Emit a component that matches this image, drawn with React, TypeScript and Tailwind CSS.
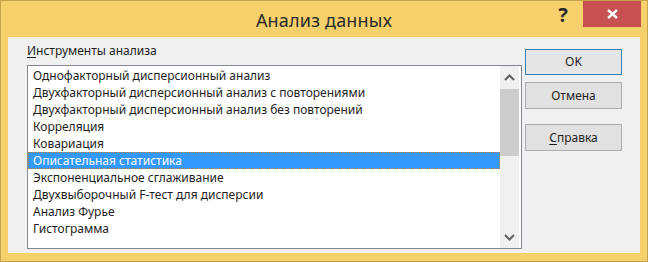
const tools = [
  "Однофакторный дисперсионный анализ",
  "Двухфакторный дисперсионный анализ с повторениями",
  "Двухфакторный дисперсионный анализ без повторений",
  "Корреляция",
  "Ковариация",
  "Описательная статистика",
  "Экспоненциальное сглаживание",
  "Двухвыборочный F-тест для дисперсии",
  "Анализ Фурье",
  "Гистограмма",
];

const font = { fontFamily: '"Noto Sans", "Open Sans", sans-serif' };

function Chevron({ up }: { up?: boolean }) {
  return (
    <svg width="11" height="7" viewBox="0 0 11 7">
      <path
        d={up ? "M1 6 L5.5 1.5 L10 6" : "M1 1 L5.5 5.5 L10 1"}
        fill="none"
        stroke="#606060"
        strokeWidth="2"
      />
    </svg>
  );
}

export default function App() {
  const selected = 5;

  return (
    <div
      className="w-[648px] h-[262px] border border-[#c4a449] bg-[#f5d06b] flex flex-col text-[#1e1e1e]"
      style={font}
    >
      {/* title bar */}
      <div className="h-[36px] flex items-start relative">
        <div className="absolute inset-x-0 top-[6px] text-center text-[18px] text-[#2b2b2b] tracking-[0.2px]">
          Анализ данных
        </div>
        <div className="ml-auto flex items-start">
          <div className="w-[24px] h-[26px] flex items-center justify-center text-[20px] font-bold text-[#2a2a2a] mt-[1px] mr-[8px]">
            ?
          </div>
          <div className="w-[58px] h-[26px] bg-[#c75050] flex items-center justify-center mr-[6px]">
            <svg width="11" height="10" viewBox="0 0 11 10">
              <path d="M1 1 L10 9 M10 1 L1 9" stroke="#fff" strokeWidth="2.4" />
            </svg>
          </div>
        </div>
      </div>

      {/* content */}
      <div className="mx-[7px] h-[216px] bg-[#f0f0f0] flex text-[12px] leading-[16px]">
        <div className="pl-[19px] pt-[6px] flex flex-col">
          <div className="mb-[6px]">
            <span className="underline underline-offset-2">И</span>нструменты анализа
          </div>
          <div className="w-[495px] h-[184px] border border-[#828790] bg-white flex">
            <div className="flex-1 pt-[1px]">
              {tools.map((t, i) => (
                <div
                  key={t}
                  className={
                    i === selected
                      ? "h-[17px] pl-[4px] bg-[#3399ff] text-white border border-dotted border-[#c08040] leading-[15px]"
                      : "h-[17px] pl-[5px] leading-[17px]"
                  }
                >
                  {t}
                </div>
              ))}
            </div>
            <div className="w-[19px] mr-[2px] bg-[#f0f0f0] flex flex-col items-center">
              <div className="h-[23px] flex items-center justify-center">
                <Chevron up />
              </div>
              <div className="w-[19px] h-[67px] bg-[#cdcdcd]" />
              <div className="flex-1" />
              <div className="h-[22px] flex items-center justify-center">
                <Chevron />
              </div>
            </div>
          </div>
        </div>

        <div className="ml-[3px] pt-[12px] flex flex-col">
          <button className="w-[97px] h-[26px] border border-[#3c7fb1] bg-[#e5e5e5] text-[12px] text-[#1e1e1e]">
            OK
          </button>
          <button className="mt-[7px] w-[97px] h-[27px] border border-[#adadad] bg-[#e1e1e1] text-[12px] text-[#1e1e1e]">
            Отмена
          </button>
          <button className="mt-[15px] w-[97px] h-[27px] border border-[#adadad] bg-[#e1e1e1] text-[12px] text-[#1e1e1e]">
            <span className="underline underline-offset-2">С</span>правка
          </button>
        </div>
      </div>
    </div>
  );
}
